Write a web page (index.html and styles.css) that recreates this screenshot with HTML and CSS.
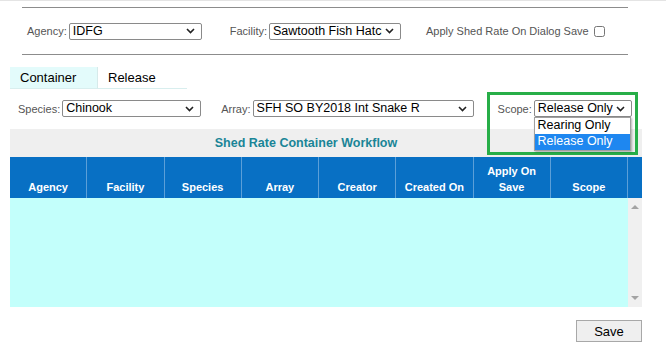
FILE: index.html
```html
<!DOCTYPE html>
<html lang="en">
<head>
  <meta charset="UTF-8">
  <meta name="viewport" content="width=device-width, initial-scale=1.0">
  <title>Shed Rate Container Workflow</title>
  <link rel="stylesheet" href="styles.css">
</head>
<body>

<div class="page">
  <div class="filters">
    <label class="lbl">Agency:</label>
    <select class="sel sel-agency"><option>IDFG</option></select>
    <label class="lbl lbl-facility">Facility:</label>
    <select class="sel sel-facility"><option>Sawtooth Fish Hatchery</option></select>
    <label class="lbl lbl-apply">Apply Shed Rate On Dialog Save</label>
    <input type="checkbox" class="chk">
  </div>

  <div class="tabs">
    <div class="tab active">Container</div>
    <div class="tab">Release</div>
  </div>

  <div class="criteria">
    <label class="lbl">Species:</label>
    <select class="sel sel-species"><option>Chinook</option></select>
    <label class="lbl lbl-array">Array:</label>
    <select class="sel sel-array"><option>SFH SO BY2018 Int Snake R</option></select>
    <div class="scope">
      <label class="lbl">Scope:</label>
      <select class="sel sel-scope"><option>Release Only</option></select>
      <ul class="dropdown">
        <li>Rearing Only</li>
        <li class="picked">Release Only</li>
      </ul>
    </div>
    <div class="highlight"></div>
  </div>

  <div class="panel">
    <div class="panel-title">Shed Rate Container Workflow</div>
    <div class="grid-head">
      <div class="col">Agency</div>
      <div class="col">Facility</div>
      <div class="col">Species</div>
      <div class="col">Array</div>
      <div class="col">Creator</div>
      <div class="col">Created On</div>
      <div class="col">Apply On<br>Save</div>
      <div class="col">Scope</div>
      <div class="gutter"></div>
    </div>
    <div class="grid-body">
      <div class="rows"></div>
      <div class="scrollbar">
        <span class="arrow up"></span>
        <span class="arrow down"></span>
      </div>
    </div>
  </div>

  <div class="actions">
    <button class="btn">Save</button>
  </div>
</div>

</body>
</html>
```

FILE: styles.css
```css
html, body {
  margin: 0;
  padding: 0;
  background: #fff;
  font-family: "Liberation Sans", Arial, sans-serif;
  color: #000;
}

.page {
  width: 666px;
  height: 354px;
  border-top: 1px solid #e4e4e4;
  box-sizing: border-box;
  overflow: hidden;
}

.lbl {
  font-size: 11px;
  color: #555;
}

.sel {
  -webkit-appearance: none;
  appearance: none;
  height: 17px;
  font-family: "Liberation Sans", Arial, sans-serif;
  font-size: 12.5px;
  line-height: 15px;
  color: #000;
  border: 1px solid #8a8a8a;
  border-radius: 2px;
  background: #fff url("data:image/svg+xml,%3Csvg xmlns='http://www.w3.org/2000/svg' width='9' height='6'%3E%3Cpath d='M1 1l3.5 3.5L8 1' fill='none' stroke='%23222' stroke-width='1.6'/%3E%3C/svg%3E") no-repeat right 6px center;
  padding: 0 18px 0 3px;
  margin: 0;
  box-sizing: border-box;
  white-space: nowrap;
  overflow: hidden;
}

/* top filter strip */
.filters {
  margin: 6px 38px 0 22px;
  height: 46px;
  border-top: 1px solid #8c8c8c;
  border-bottom: 1px solid #8c8c8c;
  display: flex;
  align-items: center;
  padding: 0 0 0 5px;
}

.filters .sel-agency { width: 133px; margin-left: 2px; }
.lbl-facility { margin-left: 28px; }
.filters .sel-facility { width: 132px; margin-left: 2px; }
.lbl-apply { margin-left: 25px; }

.chk {
  width: 11px;
  height: 11px;
  margin: 0 0 0 5px;
}

/* tabs */
.tabs {
  display: flex;
  margin: 12px 0 0 10px;
}

.tab {
  width: 78px;
  height: 22px;
  line-height: 22px;
  padding-left: 10px;
  font-size: 13px;
  border-bottom: 1px solid #d8eeee;
  box-sizing: border-box;
}

.tab + .tab { width: 89px; }

.tab.active {
  width: 88px;
  background: #e3fbfb;
  border-right: 1px solid #d6eaea;
}

/* species / array / scope row */
.criteria {
  position: relative;
  display: flex;
  align-items: center;
  height: 17px;
  margin: 11px 0 0 18px;
}

.criteria .sel-species { width: 139px; margin-left: 2px; }
.lbl-array { margin-left: 20px; }
.criteria .sel-array { width: 221px; margin-left: 2px; }

.scope {
  position: relative;
  display: flex;
  align-items: center;
  margin-left: 24px;
}

.scope .sel-scope { width: 98px; margin-left: 2px; }

.dropdown {
  position: absolute;
  left: 36px;
  top: 17px;
  width: 95px;
  margin: 0;
  padding: 0;
  list-style: none;
  background: #fff;
  border: 1px solid #a0a0a0;
  box-shadow: 1px 1px 2px rgba(0, 0, 0, 0.3);
  font-size: 12.5px;
  z-index: 3;
}

.dropdown li {
  height: 16px;
  line-height: 15px;
  padding-left: 3px;
}

.dropdown li.picked {
  background: #1e87f0;
  color: #fff;
}

.highlight {
  position: absolute;
  left: 469px;
  top: -8px;
  width: 151px;
  height: 63px;
  border: 3px solid #27ae48;
  box-sizing: border-box;
  z-index: 2;
}

/* grid panel */
.panel {
  margin: 12px 0 0 10px;
  width: 632px;
}

.panel-title {
  height: 28px;
  line-height: 28px;
  background: #efefef;
  text-align: center;
  font-size: 12.5px;
  font-weight: bold;
  color: #1a8597;
  padding-right: 40px;
}

.grid-head {
  display: flex;
  height: 41px;
  background: #0870c4;
}

.grid-head .col {
  width: 77.25px;
  display: flex;
  align-items: flex-end;
  justify-content: center;
  text-align: center;
  padding-bottom: 3px;
  box-sizing: border-box;
  border-right: 1px solid #5b9fd8;
  color: #fff;
  font-size: 11px;
  font-weight: bold;
  line-height: 16px;
}

.grid-head .gutter {
  flex: 1;
}

.grid-body {
  display: flex;
  height: 109px;
}

.rows {
  flex: 1;
  background: #c3fffb;
}

.scrollbar {
  position: relative;
  width: 14px;
  background: #f0f0f0;
}

.arrow {
  position: absolute;
  left: 3px;
  width: 0;
  height: 0;
  border-left: 4px solid transparent;
  border-right: 4px solid transparent;
}

.arrow.up {
  top: 7px;
  border-bottom: 4px solid #a3a3a3;
}

.arrow.down {
  bottom: 7px;
  border-top: 4px solid #a3a3a3;
}

/* footer */
.actions {
  display: flex;
  justify-content: flex-end;
  width: 642px;
  margin-top: 13px;
}

.btn {
  width: 66px;
  height: 22px;
  font-family: "Liberation Sans", Arial, sans-serif;
  font-size: 13px;
  background: #efefef;
  border: 1px solid #a8a8a8;
  border-radius: 0;
  color: #000;
  padding: 0;
}
```
